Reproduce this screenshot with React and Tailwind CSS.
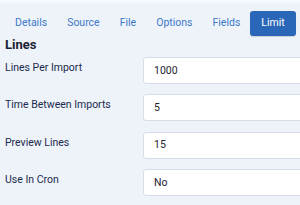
import React from "react";

const tabs = ["Details", "Source", "File", "Options", "Fields", "Limit"];

const rows = [
    { label: "Lines Per Import", value: "1000" },
    { label: "Time Between Imports", value: "5" },
    { label: "Preview Lines", value: "15" },
    { label: "Use In Cron", value: "No" },
];

export default function App() {
    return (
        <div
            className="w-[300px] h-[205px] overflow-hidden bg-[#eef3fa] relative"
            style={{ fontFamily: "Roboto, 'Liberation Sans', sans-serif" }}
        >
            {/* top shadow */}
            <div className="absolute top-0 left-0 right-0 h-[5px] bg-gradient-to-b from-[#f8fafd] to-[#eef3fa]" />

            <div className="relative pl-[5px] pt-[11px]">
                {/* Tabs */}
                <div className="flex items-center">
                    {tabs.map((t) => (
                        <button
                            key={t}
                            className={
                                t === "Limit"
                                    ? "h-[25px] px-[11px] rounded-[3px] bg-[#2b67b8] text-white text-[10.5px] leading-none shadow-[0_1px_1px_rgba(0,0,0,0.15)]"
                                    : "h-[25px] px-[10px] text-[#3d78c8] text-[10.5px] leading-none"
                            }
                        >
                            {t}
                        </button>
                    ))}
                </div>

                {/* Heading */}
                <h2 className="mt-[1px] mb-[4px] text-[13px] leading-[16px] font-bold text-[#1c2233]">Lines</h2>

                {/* Fields */}
                <div className="flex flex-col gap-[10.3px]">
                    {rows.map((r) => (
                        <div key={r.label} className="flex items-start">
                            <div className="w-[138px] shrink-0 pt-[3px] text-[10.5px] leading-[15px] text-[#1b2b4e]">
                                {r.label}
                            </div>
                            <div className="w-[180px] shrink-0 h-[27px] flex items-center bg-white border border-[#d6dde8] rounded-[3px] pl-[10px] text-[10.5px] text-[#1e2430]">
                                {r.value}
                            </div>
                        </div>
                    ))}
                </div>
            </div>
        </div>
    );
}
